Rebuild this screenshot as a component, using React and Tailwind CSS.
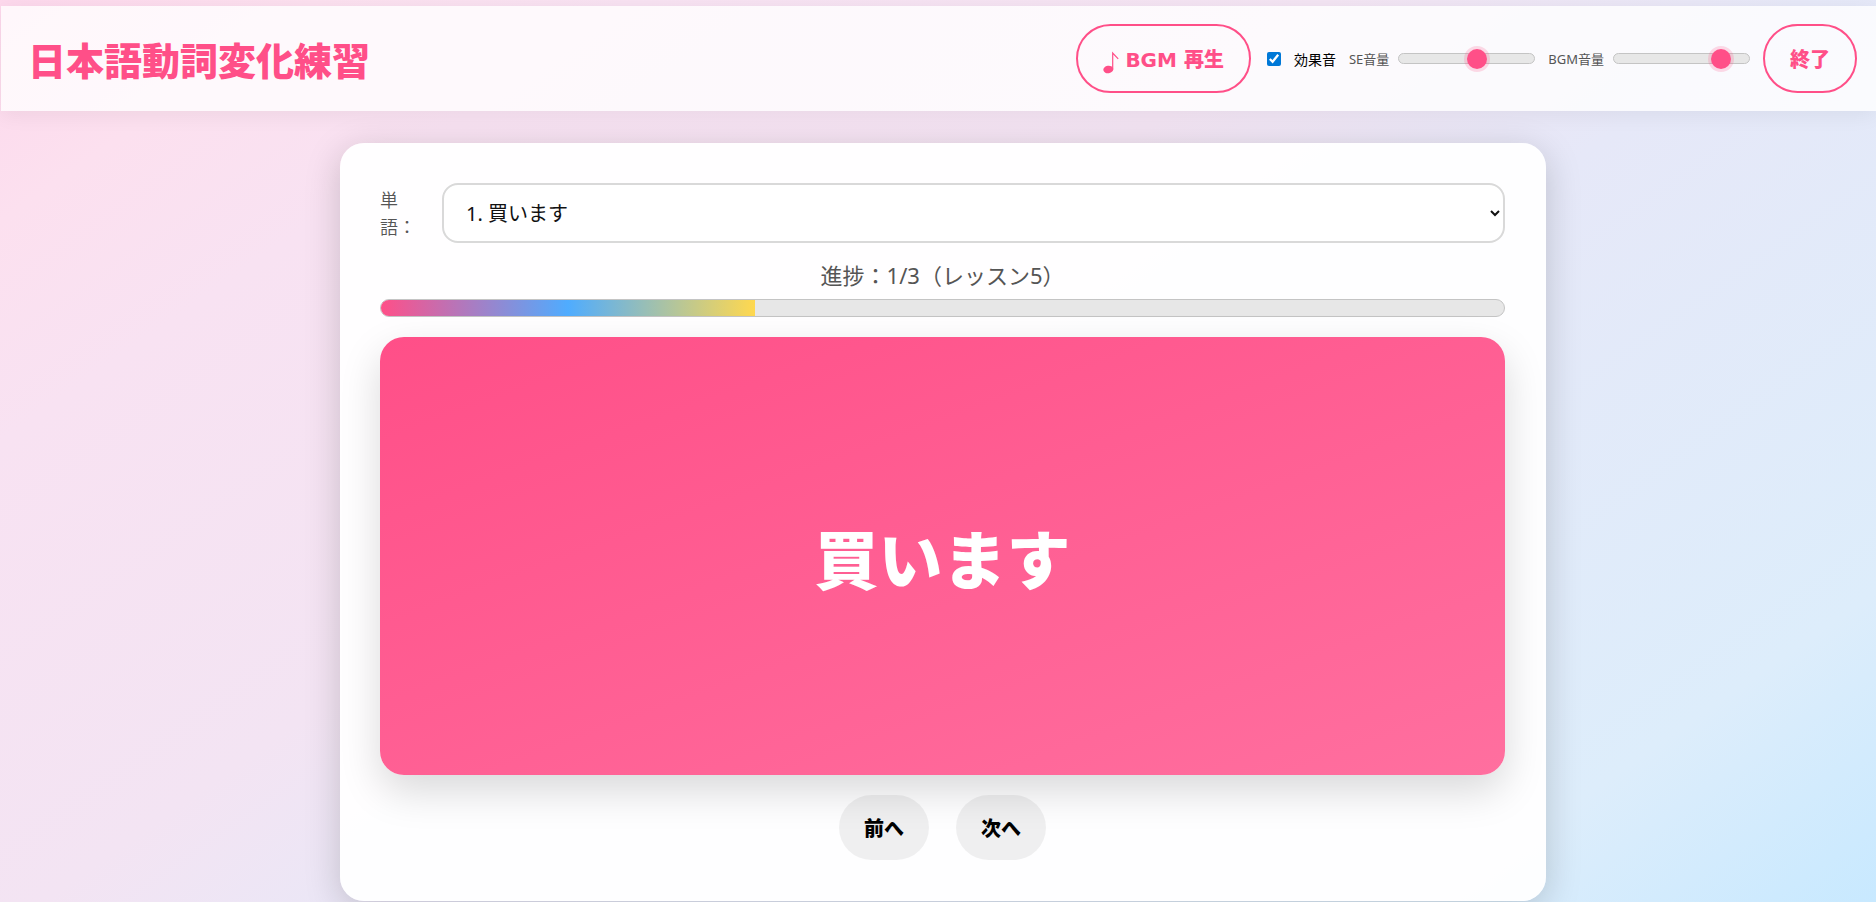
import { useState } from "react";

const words = ["買います", "食べます", "行きます"];

const trackClass =
  "block h-[11px] w-[137px] appearance-none rounded-full border border-[#c4c4c4] bg-[#e7e7e7] [&::-webkit-slider-thumb]:h-5 [&::-webkit-slider-thumb]:w-5 [&::-webkit-slider-thumb]:appearance-none [&::-webkit-slider-thumb]:rounded-full [&::-webkit-slider-thumb]:bg-[#ff4f88] [&::-webkit-slider-thumb]:shadow-[0_0_0_3px_rgba(255,79,136,0.2)]";

const outlineButton =
  "flex h-[69px] shrink-0 items-center rounded-full border-2 border-[#ff4f88] px-[25px] pt-[2px] font-['DejaVu_Sans','Noto_Sans_CJK_JP',sans-serif] text-xl font-black text-[#ff4f88]";

const navButton = "h-[65px] rounded-full bg-black/6 px-[25px] pt-[2px] text-xl font-black";

function Volume({ id, label, value, onChange }) {
  return (
    <div className="flex items-center gap-[9px]">
      <label htmlFor={id} className="pt-[2px] text-[13px] text-[#555]">
        {label}
      </label>
      <input
        id={id}
        type="range"
        min="0"
        max="100"
        value={value}
        onChange={(e) => onChange(Number(e.target.value))}
        className={trackClass}
      />
    </div>
  );
}

export default function App() {
  const [index, setIndex] = useState(0);
  const [effects, setEffects] = useState(true);
  const [se, setSe] = useState(59);
  const [bgm, setBgm] = useState(84);
  const progress = ((index + 1) / words.length) * 100;

  return (
    <div className="min-h-screen overflow-hidden bg-[linear-gradient(145deg,#fdd8ec_0%,#fce0ef_10%,#f8e2f2_20%,#f3e4f3_42%,#e6e8f8_57%,#ddedfb_86%,#c8e9ff_100%)] pt-[6px] pl-px font-['Noto_Sans','Noto_Sans_CJK_JP',sans-serif] text-black">
      <header className="flex items-center justify-between bg-white/80 py-[18px] pr-[19px] pl-[27px] shadow-[0_4px_20px_rgba(0,0,0,0.06)]">
        <h1 className="pt-[2px] text-[38px] leading-none font-black text-[#ff4f88]">日本語動詞変化練習</h1>
        <div className="flex items-center gap-[13px]">
          <button type="button" className={outlineButton}>
            <svg viewBox="0 0 16 28" className="mr-[6px] h-7 w-4" fill="none" aria-hidden="true">
              <ellipse cx="5.300" cy="23.500" rx="5" ry="3.700" transform="rotate(-10 5.300 23.500)" fill="currentColor" />
              <path d="M9.700 23.500V7L15.200 12.800" stroke="currentColor" strokeWidth="1.200" />
            </svg>
            BGM 再生
          </button>
          <label className="flex items-center gap-[13px] pl-[3px] text-[14px]">
            <input
              type="checkbox"
              checked={effects}
              onChange={(e) => setEffects(e.target.checked)}
              className="h-[14px] w-[14px] accent-[#0078d7]"
            />
            <span className="pt-[2px]">効果音</span>
          </label>
          <Volume id="se" label="SE音量" value={se} onChange={setSe} />
          <Volume id="bgm" label="BGM音量" value={bgm} onChange={setBgm} />
          <button type="button" className={outlineButton}>
            終了
          </button>
        </div>
      </header>

      <main className="pt-8 pl-[9px]">
        <section className="mx-auto max-w-[1206px] rounded-3xl bg-white/95 pt-10 pr-[41px] pb-[41px] pl-10 shadow-[0_8px_36px_rgba(0,0,0,0.18)]">
          <div className="flex items-center gap-6">
            <label htmlFor="word" className="w-[38px] shrink-0 pt-[2px] text-[18px] leading-[27px] font-[350] text-[#555]">
              単語：
            </label>
            <select
              id="word"
              value={index}
              onChange={(e) => setIndex(Number(e.target.value))}
              className="h-[60px] min-w-0 flex-1 rounded-2xl border-2 border-[#d9d9d9] bg-white px-[18px] text-xl text-[#111]"
            >
              {words.map((word, i) => (
                <option key={word} value={i}>
                  {i + 1}. {word}
                </option>
              ))}
            </select>
          </div>

          <p className="mt-4 mb-2 text-center text-[22px] leading-8 text-[#555]">
            進捗：{index + 1}/3（レッスン5）
          </p>
          <div className="h-[18px] overflow-hidden rounded-full border border-[#c4c4c4] bg-[#e7e7e7]">
            <div
              className="h-full bg-[linear-gradient(90deg,#ff4f88,#4facff,#ffd84f)]"
              style={{ width: `${progress}%` }}
            />
          </div>

          <div className="mt-5 flex h-[438px] items-center justify-center rounded-3xl bg-[linear-gradient(160deg,#ff4f88,#ff6f9f)] pt-2 text-[64px] font-black text-white shadow-[0_16px_40px_rgba(0,0,0,0.15)]">
            {words[index]}
          </div>

          <div className="mt-5 flex justify-center gap-[27px]">
            <button type="button" onClick={() => setIndex(Math.max(0, index - 1))} className={navButton}>
              前へ
            </button>
            <button
              type="button"
              onClick={() => setIndex(Math.min(words.length - 1, index + 1))}
              className={navButton}
            >
              次へ
            </button>
          </div>
        </section>
      </main>
    </div>
  );
}
